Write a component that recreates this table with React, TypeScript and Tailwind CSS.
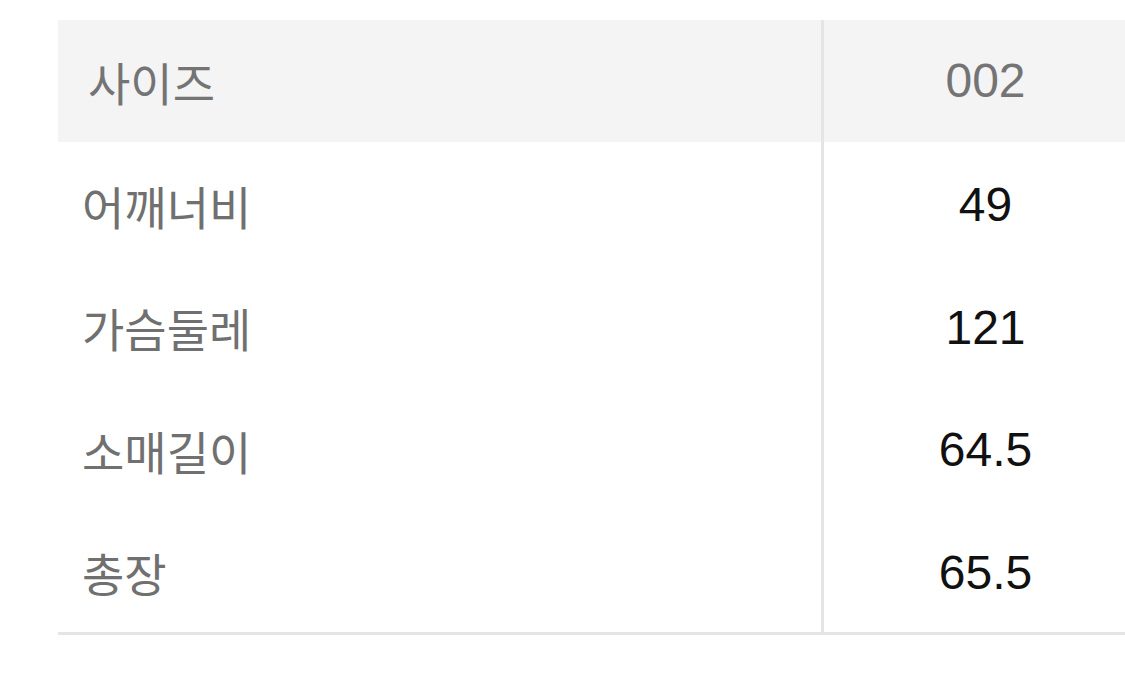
const rows = [
  { label: "어깨너비", value: "49" },
  { label: "가슴둘레", value: "121" },
  { label: "소매길이", value: "64.5" },
  { label: "총장", value: "65.5" },
];

export default function App() {
  return (
    <div className="w-[1125px] h-[694px] bg-white overflow-hidden pt-[20px] pl-[58px]">
      <div className="w-[1089px] border-b-[3px] border-[#e5e5e5]">
        {/* header */}
        <div className="flex h-[122px] bg-[#f4f4f4]">
          <div className="w-[763px] flex items-center pl-[30px] text-[46px] text-[#747474] font-['Noto_Sans_CJK_KR',sans-serif] font-normal">
            사이즈
          </div>
          <div className="flex-1 flex items-center justify-center border-l-[3px] border-[#e5e5e5] text-[48px] text-[#747474] font-['Liberation_Sans',Arial,sans-serif]">
            002
          </div>
        </div>
        {rows.map((r) => (
          <div key={r.label} className="flex h-[122.5px]">
            <div className="w-[763px] flex items-center pl-[24px] pt-[4px] text-[46px] text-[#707070] font-['Noto_Sans_CJK_KR',sans-serif] font-normal">
              {r.label}
            </div>
            <div className="flex-1 flex items-center justify-center pt-[4px] border-l-[3px] border-[#e5e5e5] text-[48px] text-[#111111] font-['Liberation_Sans',Arial,sans-serif]">
              {r.value}
            </div>
          </div>
        ))}
      </div>
    </div>
  );
}
